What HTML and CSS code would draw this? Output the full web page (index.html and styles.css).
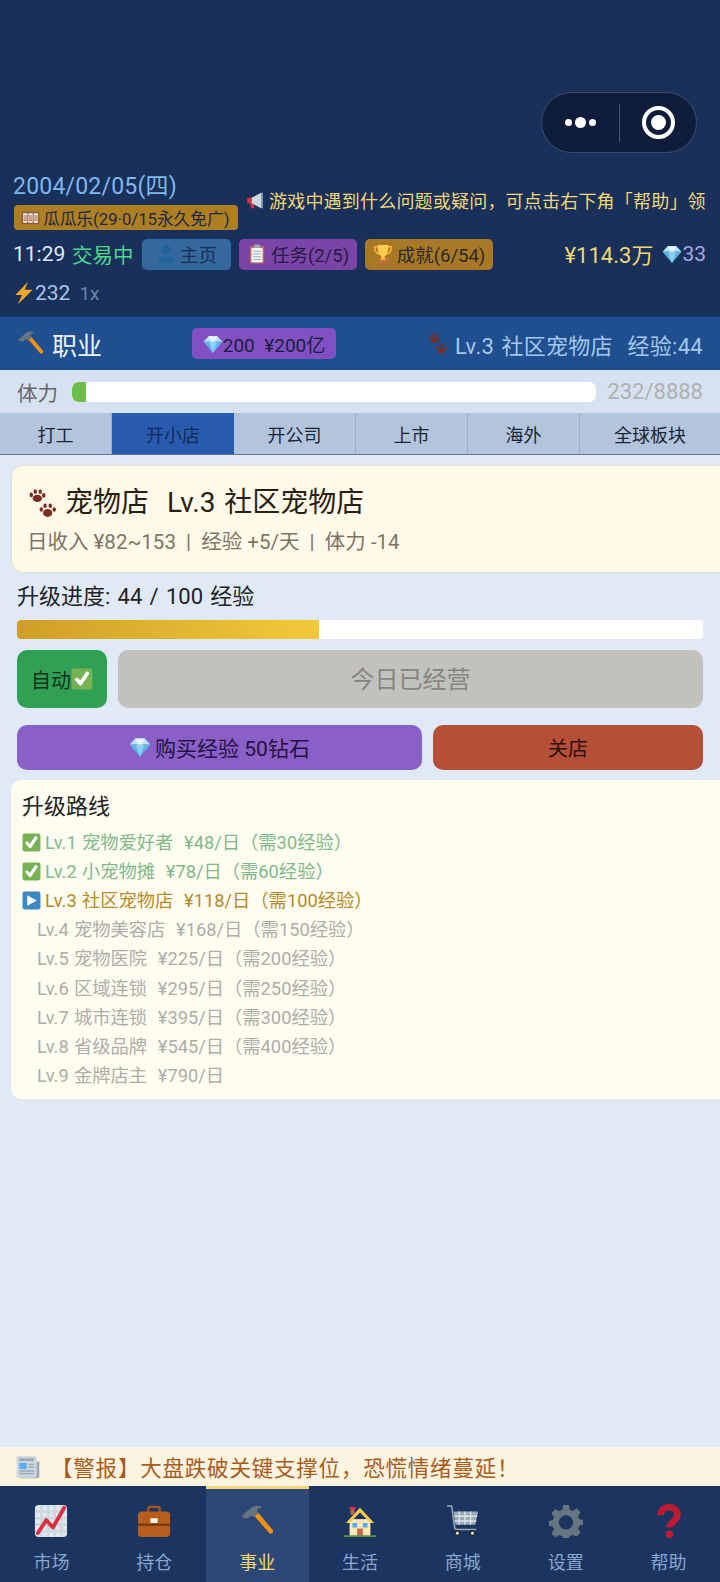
FILE: index.html
```html
<!DOCTYPE html>
<html lang="zh-CN">
<head>
    <meta charset="UTF-8">
    <meta name="viewport" content="width=device-width, initial-scale=1.0">
    <title>职业</title>
    <link rel="stylesheet" href="styles.css">
</head>
<body>

<svg class="sprites" width="0" height="0" aria-hidden="true">
    <symbol id="i-gem" viewBox="0 0 36 36">
        <path fill="#bde3f7" d="M10 4h16l9 10H1z"/>
        <path fill="#5db4e6" d="M1 14h34L18 34z"/>
        <path fill="#8ed0f2" d="M11 14h14l-7 20z"/>
        <path fill="#e4f5fd" d="M10 4h16l-5 10H15z"/>
    </symbol>
    <symbol id="i-paw" viewBox="0 0 36 36">
        <g fill="#7a2d1e">
            <ellipse cx="12" cy="12" rx="5.4" ry="4.2"/>
            <ellipse cx="5" cy="8" rx="2" ry="2.7"/>
            <ellipse cx="9.6" cy="4.2" rx="2" ry="2.7"/>
            <ellipse cx="15.4" cy="4.4" rx="2" ry="2.7"/>
            <ellipse cx="19.4" cy="8.6" rx="2" ry="2.7"/>
            <ellipse cx="24" cy="29" rx="5.4" ry="4.6"/>
            <ellipse cx="16.6" cy="25" rx="2" ry="2.7"/>
            <ellipse cx="21" cy="20.6" rx="2" ry="2.7"/>
            <ellipse cx="27" cy="20.6" rx="2" ry="2.7"/>
            <ellipse cx="31.6" cy="25" rx="2" ry="2.7"/>
        </g>
    </symbol>
    <symbol id="i-hammer" viewBox="0 0 36 36">
        <path fill="#f4900c" d="M15.5 13l4-3.5 15 17.8c.9 1 .8 2.6-.3 3.5-1 .9-2.6.8-3.5-.3z"/>
        <path fill="#66757f" d="M2 12.500L12.500 3.500c2.500-1.500 6-2 9.500-1l1 1.500c-2.500 0-4.500 1-5 3l1.500 2.500-5 4.500-2.500-2-3.500 3c-1 .5-1.500.5-2 0L2.500 14c-.5-.5-.5-1-.5-1.500z"/>
    </symbol>
    <symbol id="i-check" viewBox="0 0 36 36">
        <rect x="1" y="1" width="34" height="34" rx="4" fill="#77b255"/>
        <path fill="none" stroke="#fff" stroke-width="6" stroke-linecap="round" stroke-linejoin="round" d="M9.500 19l6 6.500L26.500 9"/>
    </symbol>
    <symbol id="i-play" viewBox="0 0 36 36">
        <rect x="1" y="1" width="34" height="34" rx="4" fill="#3b88c3"/>
        <path fill="#fff" d="M10 8l18 10-18 10z"/>
    </symbol>
    <symbol id="i-bolt" viewBox="0 0 36 36">
        <path fill="#f4a62a" d="M24 1L5 21h10L9 35 31 13H19z"/>
    </symbol>
    <symbol id="i-horn" viewBox="0 0 36 36">
        <path fill="#dd2e44" d="M4 14h8v10H4zM9 24h6l2 9h-6z"/>
        <path fill="#ccd6dd" d="M12 14L29 5v28L12 24z"/>
        <path fill="#99aab5" d="M29 5h3v28h-3z"/>
    </symbol>
    <symbol id="i-slot" viewBox="0 0 36 36">
        <rect x="1" y="7" width="34" height="24" rx="3" fill="#8a5a3c"/>
        <rect x="4" y="10" width="8" height="18" fill="#f5f0e8"/>
        <rect x="14" y="10" width="8" height="18" fill="#f5f0e8"/>
        <rect x="24" y="10" width="8" height="18" fill="#f5f0e8"/>
        <path stroke="#a0522d" stroke-width="2" d="M5 15h6M5 19h6M5 23h6M15 15h6M15 19h6M15 23h6M25 15h6M25 19h6M25 23h6"/>
    </symbol>
    <symbol id="i-bust" viewBox="0 0 36 36">
        <circle cx="18" cy="11" r="9" fill="#269"/>
        <path fill="#269" d="M3 35c0-9 6-14 15-14s15 5 15 14z"/>
    </symbol>
    <symbol id="i-clip" viewBox="0 0 36 36">
        <rect x="5" y="3" width="26" height="32" rx="3" fill="#c1694f"/>
        <rect x="8" y="7" width="20" height="26" fill="#f5f8fa"/>
        <rect x="13" y="1" width="10" height="6" rx="1" fill="#99aab5"/>
        <path stroke="#99aab5" stroke-width="2" d="M11 13h14M11 18h14M11 23h14M11 28h14"/>
    </symbol>
    <symbol id="i-cup" viewBox="0 0 36 36">
        <path fill="none" stroke="#ffac33" stroke-width="3" d="M9 5H3c0 8 3 12 8 13M27 5h6c0 8-3 12-8 13"/>
        <path fill="#ffcc4d" d="M8 2h20c0 12-3 18-7 20v4h-6v-4C11 20 8 14 8 2z"/>
        <path fill="#c1694f" d="M11 28h14v6H11z"/>
        <path fill="#ffac33" d="M13 26h10v3H13z"/>
    </symbol>
    <symbol id="i-news" viewBox="0 0 36 36">
        <path fill="#99aab5" d="M30 10h5v22a3 3 0 0 1-3 3H6z"/>
        <rect x="1" y="2" width="30" height="32" rx="2" fill="#ccd6dd"/>
        <path fill="#99aab5" d="M5 5h22v4H5zM19 13h8v2h-8zM19 17h8v2h-8zM5 23h22v2H5zM5 27h22v2H5z"/>
        <rect x="5" y="12" width="11" height="9" fill="#55acee"/>
    </symbol>
    <symbol id="i-chart" viewBox="0 0 36 36">
        <rect x="1" y="1" width="34" height="34" rx="4" fill="#e1e8ed"/>
        <path stroke="#ccd6dd" stroke-width="2.500" d="M8 1v34M15 1v34M22 1v34M29 1v34M1 8h34M1 15h34M1 22h34M1 29h34"/>
        <path fill="none" stroke="#dd2e44" stroke-width="4" stroke-linecap="round" stroke-linejoin="round" d="M4 31l9-14 7 8L32 4"/>
    </symbol>
    <symbol id="i-case" viewBox="0 0 36 36">
        <path fill="none" stroke="#a0561c" stroke-width="2.500" d="M12 9V5a2 2 0 0 1 2-2h8a2 2 0 0 1 2 2v4"/>
        <rect x="1" y="8" width="34" height="27" rx="4" fill="#b85d1c"/>
        <path fill="#6e3710" d="M1 21h34v2H1z"/>
        <rect x="14" y="15" width="8" height="5" rx="1" fill="#f5f0e0"/>
    </symbol>
    <symbol id="i-house" viewBox="0 0 36 36">
        <path fill="#ffe8b6" d="M7 16h22v18H7z"/>
        <path fill="#ffcc4d" d="M18 4L3 20h4l11-11 11 11h4z"/>
        <path fill="#c1694f" d="M8 5h4v6H8zM15 26h6v8h-6z"/>
        <path fill="#dd2e44" d="M7 3h6v3H7z"/>
        <path fill="#55acee" d="M10 20h5v5h-5zM21 20h5v5h-5z"/>
        <path fill="#5c913b" d="M1 33h34v2H1z"/>
    </symbol>
    <symbol id="i-cart" viewBox="0 0 36 36">
        <path fill="none" stroke="#99aab5" stroke-width="1.600" d="M1 2h5l3 22c0 2 1 3 3 3h20"/>
        <path fill="#99aab5" d="M8 8h26l-3 14H10z"/>
        <path stroke="#dde4e9" stroke-width="1.400" d="M14 8v14M20 8v14M26 8v14M9 13h24M9 18h23"/>
        <circle cx="12" cy="31" r="3.500" fill="#292f33"/>
        <circle cx="12" cy="31" r="1.500" fill="#e1e8ed"/>
        <circle cx="28" cy="31" r="3.500" fill="#292f33"/>
        <circle cx="28" cy="31" r="1.500" fill="#e1e8ed"/>
    </symbol>
    <symbol id="i-gear" viewBox="0 0 36 36">
        <path fill="#66757f" d="M15 1h6l1 5 3 1.300 4.300-2.800 4.200 4.200L30.700 13l1.300 3 4 1v5l-4 1-1.300 3 2.800 4.300-4.200 4.200L25 32.700 22 34l-1 2h-6l-1-2-3-1.300-4.300 2.800-4.200-4.200L5.300 27 4 24l-4-1v-5l4-1 1.300-3-2.800-4.300 4.200-4.200L11 7.300 14 6z"/>
        <circle cx="18" cy="19.500" r="7.500" fill="#1c3560"/>
    </symbol>
    <symbol id="i-ask" viewBox="0 0 36 36">
        <path fill="none" stroke="#be1931" stroke-width="7" d="M9 12c0-5 3.500-8.500 9-8.500s9 3.500 9 8c0 7-8.500 7-8.500 13.500"/>
        <circle cx="18.500" cy="32" r="4" fill="#be1931"/>
    </symbol>
</svg>

<div class="capsule">
    <div class="capsule-dots"><i></i><b></b><i></i></div>
    <div class="capsule-line"></div>
    <div class="capsule-ring"><b></b></div>
</div>

<header class="top">
    <div class="top-row">
        <div class="top-left">
            <div class="date">2004/02/05(四)</div>
            <div class="lotto"><svg class="ic-s"><use href="#i-slot"/></svg>瓜瓜乐(29·0/15永久免广)</div>
        </div>
        <div class="notice"><svg class="ic-m"><use href="#i-horn"/></svg><span>游戏中遇到什么问题或疑问，可点击右下角「帮助」领</span></div>
    </div>
    <div class="status-row">
        <span class="clock">11:29</span>
        <span class="market">交易中</span>
        <span class="chip chip-blue"><svg class="ic-m"><use href="#i-bust"/></svg>主页</span>
        <span class="chip chip-purple"><svg class="ic-m"><use href="#i-clip"/></svg>任务(2/5)</span>
        <span class="chip chip-gold"><svg class="ic-m"><use href="#i-cup"/></svg>成就(6/54)</span>
        <span class="money">¥114.3万</span>
        <span class="gems"><svg class="ic-m"><use href="#i-gem"/></svg>33</span>
    </div>
    <div class="speed-row">
        <svg class="ic-bolt"><use href="#i-bolt"/></svg><span class="energy">232</span><span class="rate">1x</span>
    </div>
</header>

<section class="career">
    <svg class="ic-l"><use href="#i-hammer"/></svg>
    <span class="career-title">职业</span>
    <span class="career-pill"><svg class="ic-m"><use href="#i-gem"/></svg>200&nbsp;&nbsp;¥200亿</span>
    <span class="career-info"><svg class="ic-m2"><use href="#i-paw"/></svg>Lv.3 社区宠物店&nbsp;&nbsp;经验:44</span>
</section>

<div class="stamina">
    <span class="stamina-label">体力</span>
    <div class="stamina-bar"><div class="stamina-fill" style="width:14px"></div></div>
    <span class="stamina-value">232/8888</span>
</div>

<nav class="tabs">
    <div class="tab tab-s">打工</div>
    <div class="tab tab-m active">开小店</div>
    <div class="tab tab-m">开公司</div>
    <div class="tab tab-s">上市</div>
    <div class="tab tab-s">海外</div>
    <div class="tab tab-l">全球板块</div>
</nav>

<main class="content">
    <div class="shop-card">
        <div class="shop-title"><svg class="ic-xl"><use href="#i-paw"/></svg>宠物店&nbsp;&nbsp;Lv.3 社区宠物店</div>
        <div class="shop-sub">日收入 ¥82~153 &nbsp;|&nbsp; 经验 +5/天 &nbsp;|&nbsp; 体力 -14</div>
    </div>

    <div class="exp-label">升级进度: 44 / 100 经验</div>
    <div class="exp-bar"><div class="exp-fill" style="width:44%"></div></div>

    <div class="btn-row">
        <div class="btn btn-auto">自动<svg class="ic-m2"><use href="#i-check"/></svg></div>
        <div class="btn btn-done">今日已经营</div>
    </div>
    <div class="btn-row btn-row2">
        <div class="btn btn-buy"><svg class="ic-m2"><use href="#i-gem"/></svg>购买经验 50钻石</div>
        <div class="btn btn-close">关店</div>
    </div>

    <div class="route">
        <div class="route-title">升级路线</div>
        <div class="route-item done"><svg class="ic-r"><use href="#i-check"/></svg>Lv.1 宠物爱好者&nbsp;&nbsp;¥48/日（需30经验）</div>
        <div class="route-item done"><svg class="ic-r"><use href="#i-check"/></svg>Lv.2 小宠物摊&nbsp;&nbsp;¥78/日（需60经验）</div>
        <div class="route-item now"><svg class="ic-r"><use href="#i-play"/></svg>Lv.3 社区宠物店&nbsp;&nbsp;¥118/日（需100经验）</div>
        <div class="route-item locked">Lv.4 宠物美容店&nbsp;&nbsp;¥168/日（需150经验）</div>
        <div class="route-item locked">Lv.5 宠物医院&nbsp;&nbsp;¥225/日（需200经验）</div>
        <div class="route-item locked">Lv.6 区域连锁&nbsp;&nbsp;¥295/日（需250经验）</div>
        <div class="route-item locked">Lv.7 城市连锁&nbsp;&nbsp;¥395/日（需300经验）</div>
        <div class="route-item locked">Lv.8 省级品牌&nbsp;&nbsp;¥545/日（需400经验）</div>
        <div class="route-item locked">Lv.9 金牌店主&nbsp;&nbsp;¥790/日</div>
    </div>
</main>

<div class="news"><svg class="ic-news"><use href="#i-news"/></svg><span>【警报】大盘跌破关键支撑位，恐慌情绪蔓延！</span></div>

<footer class="bottom">
    <div class="nav-item"><svg class="ic-nav"><use href="#i-chart"/></svg>市场</div>
    <div class="nav-item"><svg class="ic-nav"><use href="#i-case"/></svg>持仓</div>
    <div class="nav-item current"><svg class="ic-nav"><use href="#i-hammer"/></svg>事业</div>
    <div class="nav-item"><svg class="ic-nav"><use href="#i-house"/></svg>生活</div>
    <div class="nav-item"><svg class="ic-nav"><use href="#i-cart"/></svg>商城</div>
    <div class="nav-item"><svg class="ic-nav"><use href="#i-gear"/></svg>设置</div>
    <div class="nav-item"><svg class="ic-nav"><use href="#i-ask"/></svg>帮助</div>
</footer>

</body>
</html>
```

FILE: styles.css
```css
* {
    box-sizing: border-box;
}

body {
    font-family: Roboto, "Noto Sans CJK SC", sans-serif;
    background-color: #e0eaf7;
    margin: 0;
    width: 720px;
    height: 1582px;
    display: flex;
    flex-direction: column;
    overflow: hidden;
    position: relative;
}

.sprites {
    position: absolute;
}

svg {
    flex: none;
}

.ic-s { width: 19px; height: 19px; margin-right: 3px; }
.ic-m { width: 20px; height: 20px; }
.ic-m2 { width: 22px; height: 22px; }
.ic-l { width: 27px; height: 27px; }
.ic-xl { width: 31px; height: 31px; margin-right: 7px; }
.ic-r { width: 19px; height: 19px; margin: 3px 4px 0 0; }
.ic-news { width: 24px; height: 24px; margin-right: 11px; }
.ic-nav { width: 34px; height: 34px; }
.ic-bolt { width: 24px; height: 24px; margin-right: -1px; }

/* wechat capsule */
.capsule {
    position: absolute;
    left: 541px;
    top: 92px;
    width: 156px;
    height: 61px;
    border-radius: 31px;
    background: #101d3a;
    border: 1.5px solid #3c4d6c;
    display: flex;
    align-items: center;
}

.capsule-dots {
    width: 77px;
    display: flex;
    justify-content: center;
    align-items: center;
    gap: 3px;
}

.capsule-dots i {
    width: 7px;
    height: 7px;
    border-radius: 50%;
    background: #fff;
}

.capsule-dots b {
    width: 11px;
    height: 11px;
    border-radius: 50%;
    background: #fff;
}

.capsule-line {
    width: 1px;
    height: 38px;
    background: #4a5872;
}

.capsule-ring {
    width: 33px;
    height: 33px;
    margin-left: 22px;
    border: 4px solid #fff;
    border-radius: 50%;
    display: flex;
    align-items: center;
    justify-content: center;
}

.capsule-ring b {
    width: 15px;
    height: 15px;
    border-radius: 50%;
    background: #fff;
}

/* header */
.top {
    height: 316px;
    background: #18305a;
    padding: 172px 0 0 14px;
    flex: none;
}

.top-row {
    display: flex;
    gap: 7px;
}

.top-left {
    flex: none;
}

.date {
    font-size: 23px;
    line-height: 30px;
    letter-spacing: 0.2px;
    color: #7fb8ec;
    margin-left: -1px;
}

.lotto {
    margin-top: 3px;
    height: 25px;
    width: 224px;
    padding-left: 7px;
    border-radius: 4px;
    background: #ae7f22;
    color: #1d2a44;
    font-size: 16.7px;
    display: flex;
    align-items: center;
    white-space: nowrap;
}

.notice {
    display: flex;
    align-items: center;
    gap: 4px;
    height: 44px;
    margin-top: 6px;
    width: 462px;
    white-space: nowrap;
    color: #f2d774;
    font-size: 18px;
    letter-spacing: 0.2px;
}

.status-row {
    display: flex;
    align-items: center;
    height: 32px;
    margin-top: 8px;
    padding-right: 14px;
}

.clock {
    font-size: 21px;
    color: #dfe8f5;
    margin-left: -1px;
    width: 59px;
}

.market {
    font-size: 20.5px;
    color: #4fd98a;
    width: 70px;
}

.chip {
    height: 31px;
    border-radius: 5px;
    display: flex;
    align-items: center;
    justify-content: center;
    gap: 4px;
    font-size: 18.5px;
    margin-right: 8px;
}

.chip-blue { width: 89px; background: #35689f; color: #1a2f4f; }
.chip-purple { width: 118px; background: #7a45a6; color: #281a44; }
.chip-gold { width: 128px; background: #a87826; color: #2a2a2a; }

.money {
    margin-left: auto;
    padding-bottom: 3px;
    font-size: 22px;
    color: #f2d774;
}

.gems {
    display: flex;
    align-items: center;
    margin-left: 9px;
    font-size: 21px;
    color: #a9a5e8;
}

.speed-row {
    display: flex;
    align-items: center;
    height: 30px;
    margin-top: 8px;
    margin-left: -2px;
}

.energy {
    font-size: 21px;
    color: #a9c4e6;
}

.rate {
    font-size: 19px;
    color: #6d87a8;
    margin-left: 9px;
}

.career {
    height: 54px;
    flex: none;
    background: #1f4f8f;
    border-top: 1px solid #173f78;
    display: flex;
    align-items: center;
    padding: 0 17px;
}

.career-title {
    font-size: 25px;
    color: #f0f5fb;
    margin-left: 8px;
}

.career-pill {
    margin-left: 90px;
    width: 144px;
    height: 31px;
    border-radius: 5px;
    background: #8350c4;
    color: #17213f;
    font-size: 19px;
    display: flex;
    align-items: center;
    justify-content: center;
}

.career-info {
    margin-left: auto;
    display: flex;
    align-items: center;
    gap: 6px;
    font-size: 22px;
    letter-spacing: 0.3px;
    word-spacing: 1.5px;
    color: #a6c8ec;
}

.stamina {
    height: 43px;
    flex: none;
    background: #d6e2f2;
    display: flex;
    align-items: center;
    padding: 0 17px;
}

.stamina-label {
    font-size: 20.5px;
    color: #666;
    width: 55px;
}

.stamina-bar {
    width: 524px;
    height: 20px;
    border-radius: 7px;
    background: #fff;
    overflow: hidden;
}

.stamina-fill {
    height: 100%;
    background: #6cbc4a;
}

.stamina-value {
    margin-left: auto;
    font-size: 22px;
    color: #b0b0b0;
}

.tabs {
    height: 42px;
    flex: none;
    display: flex;
    background: #b3c4dd;
    border-bottom: 1px solid #66758c;
}

.tab {
    display: flex;
    align-items: center;
    justify-content: center;
    font-size: 18px;
    color: #1c2636;
    border-right: 1px solid #9fb0c8;
}

.tab:last-child {
    border-right: none;
}

.tab-s { width: 112px; }
.tab-m { width: 122px; }
.tab-l { flex: 1; }

.tab.active {
    background: #285bb0;
    color: #16294e;
    border-right: none;
}

.content {
    flex: 1;
    padding: 10px 0 0 11px;
    min-height: 0;
}

.shop-card {
    height: 108px;
    margin-right: -12px;
    background: #fff9ea;
    border: 1.5px solid #e8dfc4;
    border-radius: 12px;
    padding: 19px 15px;
}

.shop-title {
    display: flex;
    align-items: center;
    font-size: 28px;
    line-height: 36px;
    word-spacing: 2px;
    color: #2a1e10;
}

.shop-sub {
    margin-top: 7px;
    font-size: 20.5px;
    line-height: 28px;
    color: #7d7464;
}

.exp-label {
    margin: 10px 0 0 6px;
    font-size: 22px;
    line-height: 28px;
    word-spacing: 1.8px;
    color: #222;
}

.exp-bar {
    margin: 9px 17px 0 6px;
    height: 19px;
    border-radius: 4px;
    background: #fff;
    overflow: hidden;
}

.exp-fill {
    height: 100%;
    background: linear-gradient(90deg, #cf9f27, #f2c93a);
}

.btn-row {
    display: flex;
    gap: 11px;
    margin: 11px 17px 0 6px;
    height: 58px;
}

.btn-row2 {
    height: 45px;
    margin-top: 17px;
}

.btn {
    display: flex;
    align-items: center;
    justify-content: center;
    border-radius: 10px;
}

.btn-auto {
    width: 90px;
    background: #30a054;
    color: #13301d;
    font-size: 20px;
}

.btn-done {
    flex: 1;
    background: #c2c1bd;
    color: #85857f;
    font-size: 24px;
    padding-bottom: 3px;
}

.btn-buy {
    width: 405px;
    background: #8a60c8;
    color: #241343;
    font-size: 21px;
    gap: 4px;
    padding-bottom: 2px;
}

.btn-close {
    flex: 1;
    background: #b54f38;
    color: #2e100a;
    font-size: 20px;
}

.route {
    margin: 10px -12px 0 0;
    height: 319px;
    background: #fffdf0;
    border-radius: 10px;
    padding: 13px 11px;
}

.route-title {
    font-size: 22px;
    line-height: 28px;
    color: #222;
    margin-bottom: 5px;
}

.route-item {
    display: flex;
    align-items: center;
    height: 29.2px;
    font-size: 18.3px;
    word-spacing: 0.8px;
    white-space: nowrap;
}

.done { color: #7fb98c; }
.now { color: #b8892a; }

.locked {
    color: #adadaa;
    padding-left: 15px;
}

.news {
    height: 39px;
    flex: none;
    background: #fdf3e1;
    display: flex;
    align-items: center;
    padding-left: 16px;
    font-size: 21.5px;
    letter-spacing: 0.8px;
    color: #a85c1c;
}

.bottom {
    height: 96px;
    flex: none;
    background: #1c3560;
    display: flex;
}

.nav-item {
    flex: 1;
    display: flex;
    flex-direction: column;
    align-items: center;
    padding-top: 18px;
    gap: 10px;
    font-size: 18px;
    color: #8aa5cf;
}

.nav-item.current {
    background: #2d4876;
    border-top: 3px solid #f2d774;
    padding-top: 15px;
    color: #f2d774;
}
```
